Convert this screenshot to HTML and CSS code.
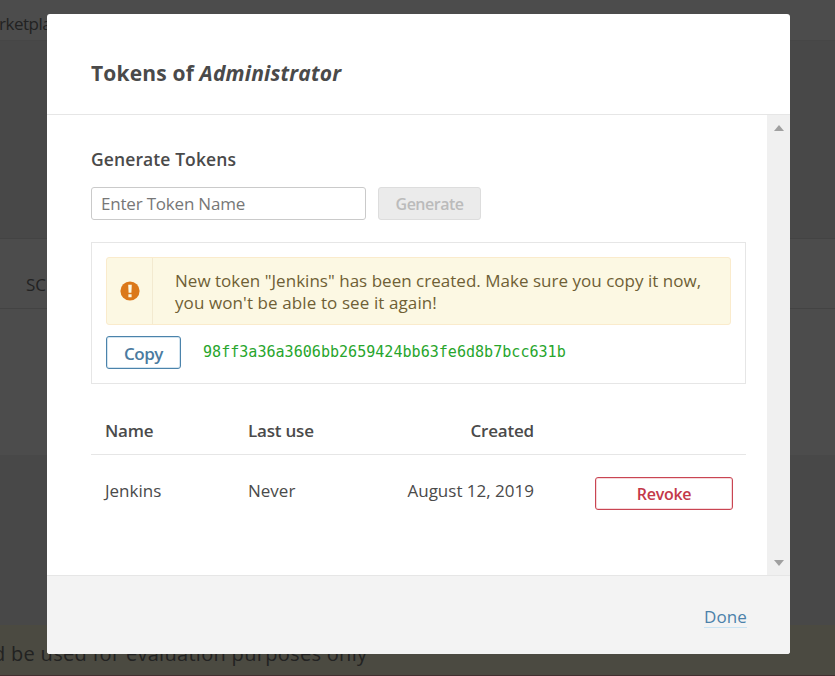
FILE: index.html
```html
<!DOCTYPE html>
<html lang="en">
<head>
<meta charset="utf-8">
<title>Tokens</title>
<link rel="stylesheet" href="styles.css">
</head>
<body>
<div class="page">
  <div class="page-nav">rketplace</div>
  <div class="page-head"></div>
  <div class="page-columns">SCM Accounts</div>
  <div class="page-row"></div>
  <div class="page-space"></div>
  <div class="page-warning">d be used for evaluation purposes only</div>
</div>
<div class="modal" role="dialog">
  <header class="modal-head"><h2>Tokens of <em>Administrator</em></h2></header>
  <div class="modal-body">
    <div class="content">
      <h3>Generate Tokens</h3>
      <form class="token-form">
        <input type="text" placeholder="Enter Token Name">
        <button type="button" class="button generate" disabled>Generate</button>
      </form>
      <section class="panel">
        <div class="alert">
          <div class="alert-icon">
            <svg width="20" height="20" viewBox="0 0 20 20"><circle cx="10" cy="10" r="9.6" fill="#db781a"/><path d="M8.2 3.7h3.6l-.4 8.1H8.6zM8.4 13.3h3.2v2.9H8.4z" fill="#fcf8e3"/></svg>
          </div>
          <p><span class="line-one">New token "Jenkins" has been created. Make sure you copy it now,</span><br><span class="line-two">you won't be able to see it again!</span></p>
        </div>
        <div class="token-row">
          <button type="button" class="button copy">Copy</button>
          <code>98ff3a36a3606bb2659424bb63fe6d8b7bcc631b</code>
        </div>
      </section>
      <div class="tokens">
        <div class="row row-head"><span>Name</span><span class="use">Last use</span><span class="date">Created</span></div>
        <div class="row"><span>Jenkins</span><span>Never</span><span class="date">August 12, 2019</span><button type="button" class="button revoke">Revoke</button></div>
      </div>
    </div>
    <div class="scrollbar">
      <svg width="10" height="6" viewBox="0 0 10 6"><path d="M0 6 5 0l5 6z" fill="#a0a0a0"/></svg>
      <svg width="10" height="6" viewBox="0 0 10 6"><path d="M0 0h10L5 6z" fill="#a0a0a0"/></svg>
    </div>
  </div>
  <footer class="modal-foot"><a>Done</a></footer>
</div>
</body>
</html>
```
FILE: styles.css
```css
* { box-sizing: border-box; }
body {
  margin: 0;
  width: 835px;
  height: 676px;
  overflow: hidden;
  position: relative;
  font-family: "Open Sans", "Noto Sans", sans-serif;
  font-size: 17px;
  line-height: 22px;
  color: #4a4a4a;
}
h2, h3, p { margin: 0; }
.page {
  height: 676px;
  display: flex;
  flex-direction: column;
  background: #484848;
  color: #222;
  white-space: nowrap;
}
.page-nav { height: 41px; padding-top: 13px; background: #4c4c4c; border-bottom: 1px solid #464646; letter-spacing: -0.5px; text-indent: -1px; }
.page-head { height: 197px; }
.page-columns { height: 71px; padding: 35px 0 0 26px; background: #4c4c4c; border: solid #434343; border-width: 1px 0; }
.page-row { height: 146px; background: #4c4c4c; }
.page-space { height: 170px; }
.page-warning { height: 51px; padding-top: 18px; background: #4b4a41; border-bottom: 1px solid #432f30; font-size: 20px; letter-spacing: 0.3px; text-indent: -7px; }

.modal {
  position: absolute;
  left: 47px;
  top: 14px;
  width: 743px;
  height: 640px;
  display: flex;
  flex-direction: column;
  background: #fff;
  border-radius: 3px;
  overflow: hidden;
}
.modal-head { height: 101px; padding: 47px 44px 0; border-bottom: 1px solid #e6e6e6; }
h2 { font-size: 21px; line-height: 24px; font-weight: 700; letter-spacing: 0.17px; white-space: nowrap; }
.modal-body { height: 460px; display: flex; }
.content { flex: 1; padding: 33px 21px 0 44px; }
h3 { font-size: 17.5px; line-height: 22px; font-weight: 600; letter-spacing: 0.1px; }
.token-form { display: flex; gap: 12px; margin-top: 17px; }
input {
  width: 275px;
  height: 33px;
  padding: 0 9px;
  border: 1px solid #cacaca;
  border-radius: 3px;
  font: inherit;
  letter-spacing: -0.2px;
}
input::placeholder { color: #777; }
.button {
  height: 33px;
  padding: 0;
  background: #fff;
  border: 1px solid;
  border-radius: 3px;
  font: 600 17px/22px "Open Sans", "Noto Sans", sans-serif;
}
.generate { width: 103px; background: #ebebeb; border-color: #ddd; color: #bbb; font-size: 16px; letter-spacing: -0.5px; }
.panel { height: 142px; margin-top: 22px; padding: 14px; border: 1px solid #e6e6e6; }
.alert {
  height: 68px;
  display: flex;
  background: #fcf8e3;
  border: 1px solid #faebcc;
  border-radius: 3px;
  color: #6f5f35;
  white-space: nowrap;
}
.alert-icon { width: 46px; display: flex; align-items: center; justify-content: center; border-right: 1px solid #f3ead0; }
.alert p { padding: 12px 0 0 22px; }
.line-one { letter-spacing: 0.02px; }
.line-two { letter-spacing: 0.1px; }
.token-row { display: flex; gap: 22px; margin-top: 11px; }
.copy { width: 75px; padding-top: 2px; color: #4b7ba0; border-color: #4b83ab; box-shadow: inset 0 0 0 1px #d3e4ef; letter-spacing: -0.5px; }
code { font: 15.07px/32px "DejaVu Sans Mono", monospace; color: #27a52c; }
.row {
  display: grid;
  grid-template-columns: 143px 159px 127px 138px;
  height: 70px;
  padding: 22px 14px 0;
  white-space: nowrap;
}
.row .date { justify-self: end; }
.row-head { height: 71px; padding-top: 36px; border-bottom: 1px solid #e6e6e6; font-weight: 600; letter-spacing: -0.2px; }
.row .revoke { margin-left: 61px; width: 138px; padding-top: 1px; color: #c3394a; border-color: #c94552; box-shadow: inset 0 0 0 1px #f6d9dc; font-size: 16px; letter-spacing: -0.3px; }
.row:last-child { line-height: 28px; }
.scrollbar { width: 23px; padding: 10px 0 9px; display: flex; flex-direction: column; align-items: center; justify-content: space-between; background: #f0f0f0; }
.modal-foot { height: 79px; padding: 30px 43px 0; display: flex; justify-content: flex-end; align-items: flex-start; background: #f3f3f3; border-top: 1px solid #e6e6e6; }
.modal-foot a { color: #4b81aa; border-bottom: 1px solid #cae3f2; line-height: 21px; letter-spacing: 0.1px; }
```
